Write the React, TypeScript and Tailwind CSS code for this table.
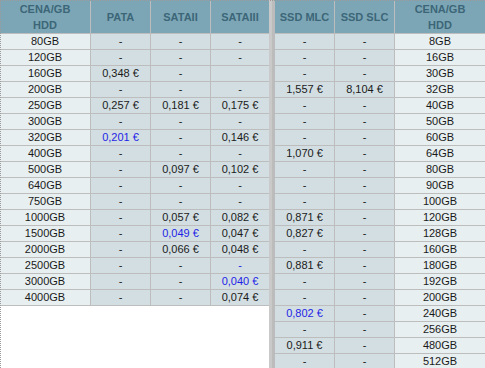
import React from 'react';

type Val = string | { t: string; blue: true };

const b = (t: string): Val => ({ t, blue: true });

const leftRows: [string, Val, Val, Val][] = [
    ['80GB', '-', '-', '-'],
    ['120GB', '-', '-', '-'],
    ['160GB', '0,348 €', '-', ''],
    ['200GB', '-', '-', '-'],
    ['250GB', '0,257 €', '0,181 €', '0,175 €'],
    ['300GB', '-', '-', '-'],
    ['320GB', b('0,201 €'), '-', '0,146 €'],
    ['400GB', '-', '-', '-'],
    ['500GB', '-', '0,097 €', '0,102 €'],
    ['640GB', '-', '-', '-'],
    ['750GB', '-', '-', '-'],
    ['1000GB', '-', '0,057 €', '0,082 €'],
    ['1500GB', '-', b('0,049 €'), '0,047 €'],
    ['2000GB', '-', '0,066 €', '0,048 €'],
    ['2500GB', '-', '-', b('-')],
    ['3000GB', '-', '-', b('0,040 €')],
    ['4000GB', '-', '-', '0,074 €'],
];

const rightRows: [Val, Val, string][] = [
    ['-', '-', '8GB'],
    ['-', '-', '16GB'],
    ['-', '-', '30GB'],
    ['1,557 €', '8,104 €', '32GB'],
    ['-', '-', '40GB'],
    ['-', '-', '50GB'],
    ['-', '-', '60GB'],
    ['1,070 €', '-', '64GB'],
    ['-', '-', '80GB'],
    ['-', '-', '90GB'],
    ['-', '-', '100GB'],
    ['0,871 €', '-', '120GB'],
    ['0,827 €', '-', '128GB'],
    ['-', '-', '160GB'],
    ['0,881 €', '-', '180GB'],
    ['-', '-', '192GB'],
    ['-', '-', '200GB'],
    [b('0,802 €'), '-', '240GB'],
    ['-', '-', '256GB'],
    ['0,911 €', '-', '480GB'],
    ['-', '-', '512GB'],
];

const Text = ({ v }: { v: Val }) =>
    typeof v === 'string' ? <span>{v}</span> : <span className="text-[#1f1fe6]">{v.t}</span>;

const Head = ({ className, children }: { className: string; children: React.ReactNode }) => (
    <div
        className={`flex items-center justify-center text-center font-bold text-[11px] leading-[16px] text-[#3c6678] ${className}`}
    >
        {children}
    </div>
);

export default function App() {
    return (
        <div className="relative w-[485px] h-[368px] overflow-hidden bg-white font-['Liberation_Sans',Arial,sans-serif] text-[11px] text-[#1a1a1a]">
            <div className="flex items-start h-full">
                {/* left table: HDD */}
                <div className="w-[269px]">
                    <div className="flex h-[34px] bg-[#7ca6b6] border-b border-[#bdbdbd]">
                        <Head className="w-[91px] border-r border-[#bdbdbd]">
                            CENA/GB
                            <br />
                            HDD
                        </Head>
                        <Head className="w-[60px] border-r border-[#bdbdbd]">PATA</Head>
                        <Head className="w-[60px] border-r border-[#bdbdbd]">SATAII</Head>
                        <Head className="w-[58px]">SATAIII</Head>
                    </div>
                    {leftRows.map(([label, a, s2, s3]) => (
                        <div key={label} className="flex h-4 border-b border-[#bdbdbd] leading-none">
                            <div className="w-[91px] flex items-center justify-center bg-[#e8eff1] border-r border-[#bdbdbd]">
                                {label}
                            </div>
                            <div className="w-[60px] flex items-center justify-center bg-[#d2dee2] border-r border-[#bdbdbd]">
                                <Text v={a} />
                            </div>
                            <div className="w-[60px] flex items-center justify-center bg-[#d2dee2] border-r border-[#bdbdbd]">
                                <Text v={s2} />
                            </div>
                            <div className="w-[58px] flex items-center justify-center bg-[#d2dee2]">
                                <Text v={s3} />
                            </div>
                        </div>
                    ))}
                </div>

                {/* divider */}
                <div className="flex self-stretch">
                    <div className="w-[3px] bg-[#c9c9c9]" />
                    <div className="w-[3px] bg-[#bcbcbc]" />
                </div>

                {/* right table: SSD */}
                <div className="w-[210px]">
                    <div className="flex h-[34px] bg-[#7ca6b6] border-b border-[#bdbdbd]">
                        <Head className="w-[60px] border-r border-[#bdbdbd]">SSD MLC</Head>
                        <Head className="w-[60px] border-r border-[#bdbdbd]">SSD SLC</Head>
                        <Head className="w-[90px]">
                            CENA/GB
                            <br />
                            HDD
                        </Head>
                    </div>
                    {rightRows.map(([mlc, slc, label]) => (
                        <div key={label} className="flex h-4 border-b border-[#bdbdbd] leading-none">
                            <div className="w-[60px] flex items-center justify-center bg-[#d2dee2] border-r border-[#bdbdbd]">
                                <Text v={mlc} />
                            </div>
                            <div className="w-[60px] flex items-center justify-center bg-[#d2dee2] border-r border-[#bdbdbd]">
                                <Text v={slc} />
                            </div>
                            <div className="w-[90px] flex items-center justify-center bg-[#e8eff1]">{label}</div>
                        </div>
                    ))}
                </div>
            </div>

            {/* dotted focus outline at the page edge */}
            <div className="absolute inset-0 border-t border-l border-dotted border-[#9a9a9a] pointer-events-none" />
        </div>
    );
}
